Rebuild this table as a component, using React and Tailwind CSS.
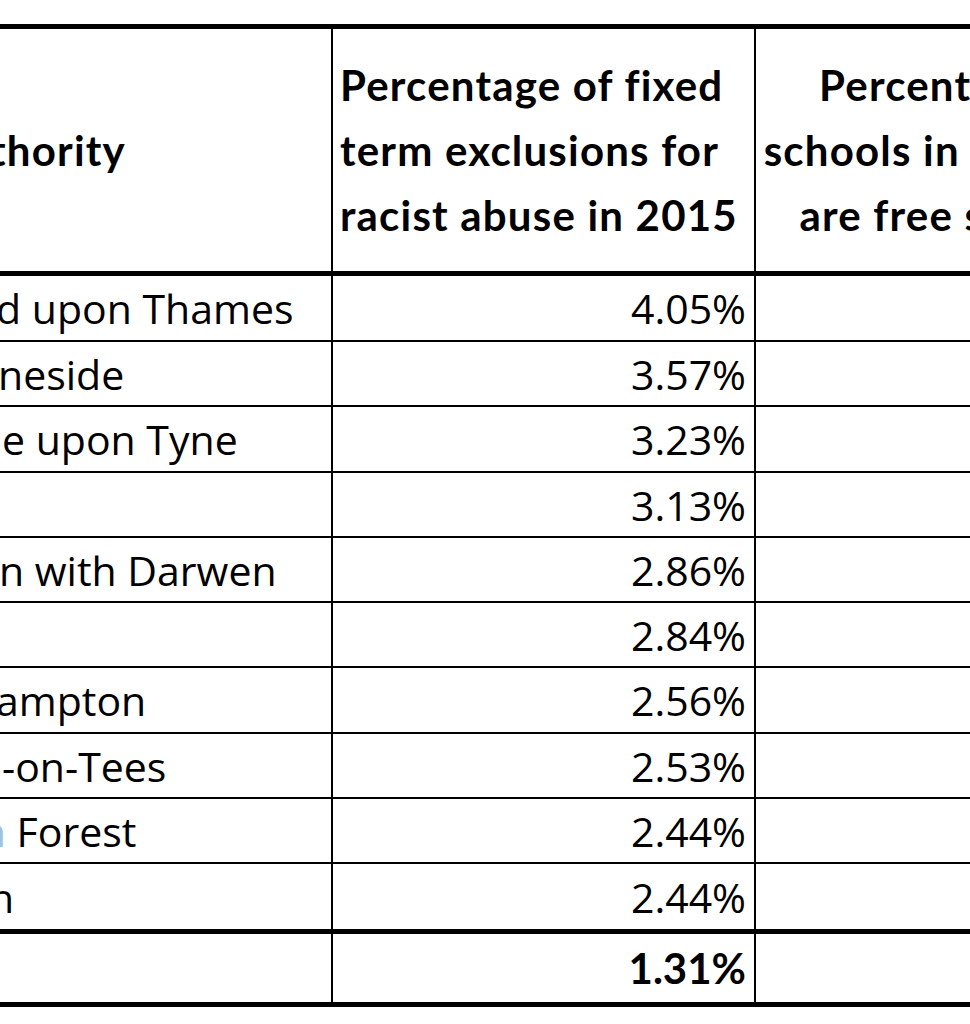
const rows = [
  { name: "d upon Thames", shift: "-ml-[4px]", value: "4.05%", h: "h-[66px]" },
  { name: "neside", shift: "-ml-[2px]", value: "3.57%", h: "h-[65px]" },
  { name: "e upon Tyne", shift: "ml-[2px]", value: "3.23%", h: "h-[66px]" },
  { name: "", shift: "", value: "3.13%", h: "h-[65px]" },
  { name: "n with Darwen", shift: "-ml-[1px]", value: "2.86%", h: "h-[65px]" },
  { name: "", shift: "", value: "2.84%", h: "h-[65px]" },
  { name: "ampton", shift: "-ml-[4px]", value: "2.56%", h: "h-[66px]" },
  { name: "-on-Tees", shift: "ml-[2px]", value: "2.53%", h: "h-[65px]" },
  { name: "forest", shift: "-ml-[32px]", value: "2.44%", h: "h-[65px]" },
  { name: "n", shift: "-ml-[11px]", value: "2.44%", h: "h-[65px]", last: true },
]

const Row = ({ row }) => {
  return (
    <div className={`flex ${row.h} ${row.last ? "" : "border-b-2"} border-black`}>
      <div className="w-[333px] shrink-0 flex items-center overflow-hidden border-r-2 border-black">
        {row.name === "forest" ? (
          <span className="whitespace-nowrap leading-[50px] -ml-[32px]">
            <span className="text-[#9cc2e5]">m</span> Forest
          </span>
        ) : (
          <span className={`whitespace-nowrap leading-[50px] ${row.shift}`}>{row.name}</span>
        )}
      </div>
      <div className="w-[423px] shrink-0 flex items-center justify-end pr-[8px] border-r-2 border-black">
        <span className="leading-[50px]">{row.value}</span>
      </div>
      <div className="w-[400px] shrink-0" />
    </div>
  )
}

const App = () => {
  return (
    <div className="w-[970px] h-[1024px] overflow-hidden bg-white text-black text-[41px] font-['Open_Sans',sans-serif]">
      <div className="mt-[24px] w-[1160px]">
        {/* header */}
        <div className="flex h-[252px] border-t-[5px] border-b-[5px] border-black font-['Lato',sans-serif] font-bold text-[42px] tracking-[1.2px]">
          <div className="w-[333px] shrink-0 flex items-center overflow-hidden border-r-2 border-black">
            <span className="whitespace-nowrap leading-[65px] -ml-[10px]">thority</span>
          </div>
          <div className="w-[423px] shrink-0 flex items-center pl-[7px] border-r-2 border-black">
            <span className="leading-[65px] whitespace-nowrap">
              Percentage of fixed
              <br />
              term exclusions for
              <br />
              racist abuse in 2015
            </span>
          </div>
          <div className="w-[400px] shrink-0 flex items-center justify-center">
            <span className="leading-[65px] whitespace-nowrap text-center">
              Percentage of
              <br />
              schools in area that
              <br />
              are free schools
            </span>
          </div>
        </div>

        {rows.map((row, i) => (
          <Row key={i} row={row} />
        ))}

        {/* total */}
        <div className="flex h-[78px] border-t-[5px] border-b-[5px] border-black">
          <div className="w-[333px] shrink-0 border-r-2 border-black" />
          <div className="w-[423px] shrink-0 flex items-center justify-end pr-[8px] border-r-2 border-black font-['Lato',sans-serif] font-bold text-[42px]">
            <span className="leading-[50px]">1.31%</span>
          </div>
          <div className="w-[400px] shrink-0" />
        </div>
      </div>
    </div>
  )
}

export default App
